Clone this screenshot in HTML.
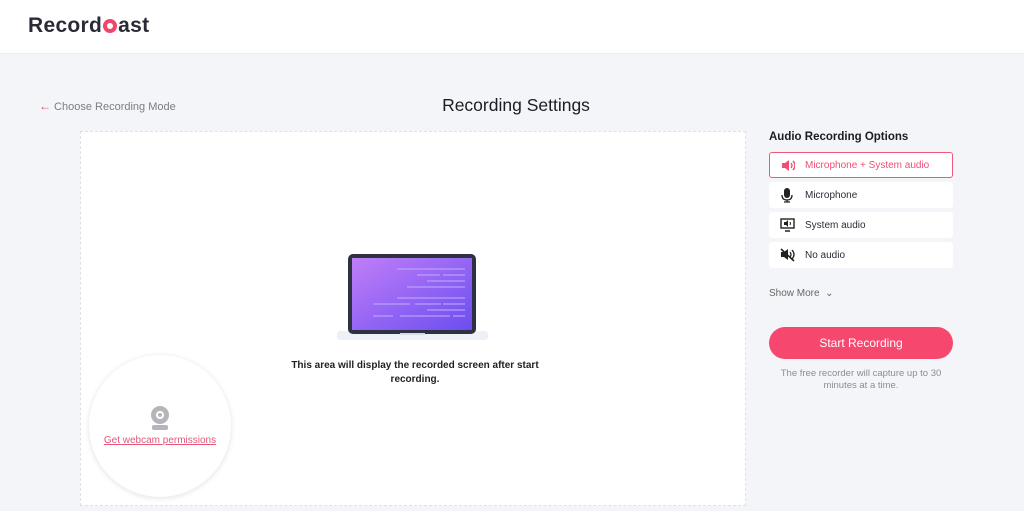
<!DOCTYPE html>
<html><head><style>
*{margin:0;padding:0;box-sizing:border-box}
body{width:1024px;height:511px;background:#f4f5f8;font-family:"Liberation Sans",sans-serif;position:relative;overflow:hidden;color:#1f2430}
.hdr{position:absolute;left:0;top:0;width:1024px;height:54px;background:#fff;border-bottom:1px solid #eceef2}
.logo{position:absolute;left:28px;top:14px;font-size:21px;font-weight:bold;color:#2a2b36;letter-spacing:0.3px}
.dot{display:inline-block;width:14px;height:14px;border-radius:50%;background:#f0466b;position:relative;top:1px;margin:0 1px}
.dot:after{content:"";position:absolute;left:4px;top:4px;width:6px;height:6px;border-radius:50%;background:#fff}
.back{position:absolute;left:39px;top:99px;font-size:11px;color:#7a7d85}
.back b{color:#f0466b;font-weight:normal;font-size:12px}
h1{position:absolute;left:0;width:1032px;text-align:center;top:95px;font-size:17.5px;font-weight:normal;color:#1a1c26}
.box{position:absolute;left:80px;top:131px;width:666px;height:375px;background:#fff;border:1px dashed #dde0e6}
.msg{position:absolute;left:290px;top:359px;width:250px;text-align:center;font-size:10px;font-weight:bold;line-height:14px;color:#222}
.circ{position:absolute;left:89px;top:355px;width:142px;height:142px;border-radius:50%;background:#fff;box-shadow:0 1px 6px rgba(0,0,0,0.12)}
.circ a{position:absolute;left:0;width:142px;text-align:center;top:80px;font-size:10px;color:#e2577a;text-decoration:underline}
.ttl{position:absolute;left:769px;top:131px;font-size:11.5px;font-weight:bold;color:#1a1c26}
.opt{position:absolute;left:769px;width:184px;height:26px;background:#fff;border-radius:3px;font-size:10px;color:#2b2d36;padding-left:36px;line-height:27px}
.opt.sel{border:1px solid #ef5a7a;color:#ef4f72;line-height:25px;padding-left:35px}
.opt svg{position:absolute;left:11px;top:6px}
.more{position:absolute;left:769px;top:288px;font-size:10px;color:#666}
.btn{position:absolute;left:769px;top:327px;width:184px;height:32px;border-radius:16px;background:#f6486e;color:#fff;font-size:12px;text-align:center;line-height:32px}
.note{position:absolute;left:769px;top:368px;width:184px;text-align:center;font-size:9.5px;color:#8a8d94;line-height:11.5px}
</style></head><body>
<div class="hdr"><div class="logo">Record<span class="dot"></span>ast</div></div>
<div class="back"><b>&#8592;</b> Choose Recording Mode</div>
<h1>Recording Settings</h1>
<div class="box"></div>
<svg style="position:absolute;left:335px;top:253px" width="155" height="90">
<defs><linearGradient id="g" x1="0" y1="0" x2="1" y2="1"><stop offset="0" stop-color="#c07ef8"/><stop offset="1" stop-color="#6b4ef0"/></linearGradient></defs>
<rect x="2" y="78" width="151" height="9" rx="3" fill="#eef0f7"/>
<rect x="13" y="1" width="128" height="80" rx="5" fill="#2e3142"/>
<rect x="17" y="5" width="120" height="72" fill="url(#g)"/>
<g stroke="#b9a2ff" stroke-width="1.5" opacity=".8"><line x1="62" y1="16" x2="130" y2="16"/><line x1="82" y1="22" x2="105" y2="22"/><line x1="108" y1="22" x2="130" y2="22"/><line x1="92" y1="28" x2="130" y2="28"/><line x1="72" y1="34" x2="130" y2="34"/><line x1="62" y1="45" x2="130" y2="45"/><line x1="38" y1="51" x2="75" y2="51"/><line x1="80" y1="51" x2="106" y2="51"/><line x1="108" y1="51" x2="130" y2="51"/><line x1="92" y1="57" x2="130" y2="57"/><line x1="38" y1="63" x2="58" y2="63"/><line x1="65" y1="63" x2="115" y2="63"/><line x1="118" y1="63" x2="130" y2="63"/></g>
<rect x="65" y="80" width="25" height="2" fill="#d8dbe6"/>
</svg>
<div class="msg">This area will display the recorded screen after start recording.</div>
<div class="circ">
<svg style="position:absolute;left:60px;top:50px" width="22" height="26"><circle cx="11" cy="10" r="9" fill="#b5b6ba"/><circle cx="11" cy="10" r="4" fill="#fff"/><circle cx="11" cy="10" r="2" fill="#b5b6ba"/><rect x="3" y="20" width="16" height="5" rx="2" fill="#b5b6ba"/></svg>
<a>Get webcam permissions</a></div>
<div class="ttl">Audio Recording Options</div>
<div class="opt sel" style="top:152px"><svg width="14" height="13"><path d="M1 4h3l4-3v11l-4-3H1z" fill="#ef4f72"/><path d="M10 4q2 2.5 0 5M12 2q4 4.5 0 9" stroke="#ef4f72" stroke-width="1.4" fill="none"/></svg>Microphone + System audio</div>
<div class="opt" style="top:182px"><svg width="14" height="15"><rect x="4" y="0" width="6" height="10" rx="3" fill="#222"/><path d="M2 7q0 5 5 5t5-5M7 12v2M4 14h6" stroke="#222" stroke-width="1.3" fill="none"/></svg>Microphone</div>
<div class="opt" style="top:212px"><svg width="15" height="14"><rect x="1" y="1" width="13" height="9" fill="none" stroke="#222" stroke-width="1.4"/><path d="M4 4h2l2-2v7l-2-2H4z" fill="#222"/><path d="M10 4q1 1.5 0 3" stroke="#222" fill="none"/><path d="M5 13h5" stroke="#222" stroke-width="1.5"/></svg>System audio</div>
<div class="opt" style="top:242px"><svg width="15" height="14"><path d="M1 4h3l4-3v11l-4-3H1z" fill="#222"/><path d="M10 4q2 2.5 0 5M12 2q4 4.5 0 9" stroke="#222" stroke-width="1.3" fill="none"/><path d="M1 1l13 12" stroke="#222" stroke-width="1.6"/></svg>No audio</div>
<div class="more">Show More &nbsp;&#8964;</div>
<div class="btn">Start Recording</div>
<div class="note">The free recorder will capture up to 30 minutes at a time.</div>
</body></html>
